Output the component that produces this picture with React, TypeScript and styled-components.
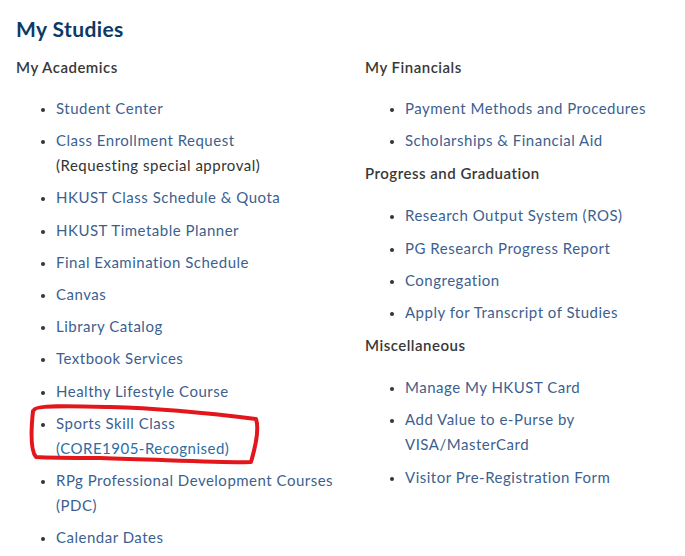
import React from "react";
import styled, { createGlobalStyle } from "styled-components";

const Global = createGlobalStyle`
  html, body { margin: 0; padding: 0; background: #fff; }
  body { font-family: "Lato", "Open Sans", sans-serif; }
`;

const Page = styled.div`
  position: relative;
  padding: 16px 16px 0 16px;
  width: 685px;
  box-sizing: border-box;
`;

const Title = styled.h1`
  margin: 0;
  font-size: 21px;
  line-height: 26px;
  font-weight: 700;
  color: #0c3a64;
  letter-spacing: 0.4px;
`;

const Columns = styled.div`
  display: grid;
  grid-template-columns: 333px 1fr;
  column-gap: 16px;
  margin-top: 14px;
`;

const Column = styled.div`
  display: flex;
  flex-direction: column;
`;

const Heading = styled.h2`
  margin: 0;
  font-size: 15px;
  line-height: 22px;
  font-weight: 600;
  color: #383838;
  letter-spacing: 0.5px;
`;

const List = styled.ul`
  margin: 18px 0 2px;
  padding-left: 40px;
  list-style: disc;
  color: #333;
  ${Heading}:not(:first-child) + & {
    margin-top: 19px;
  }
`;

const Item = styled.li`
  font-size: 15px;
  line-height: 25px;
  margin-bottom: 7.2px;
  letter-spacing: 0.5px;
  &::marker { font-size: 12px; }
`;

const Link = styled.a<{ $accent?: boolean }>`
  color: ${(p) => (p.$accent ? "#2c6ea5" : "#3d5f8f")};
  text-decoration: none;
`;

const Note = styled.span`
  color: #333;
`;

const Scribble = styled.svg`
  position: absolute;
  left: 0;
  top: 0;
  pointer-events: none;
`;

export default function App() {
  return (
    <>
      <Global />
      <Page>
        <Title>My Studies</Title>
        <Columns>
          <Column>
            <Heading>My Academics</Heading>
            <List>
              <Item><Link>Student Center</Link></Item>
              <Item>
                <Link>Class Enrollment Request</Link>
                <br />
                <Note>(Requesting special approval)</Note>
              </Item>
              <Item><Link>HKUST Class Schedule &amp; Quota</Link></Item>
              <Item><Link>HKUST Timetable Planner</Link></Item>
              <Item><Link>Final Examination Schedule</Link></Item>
              <Item><Link>Canvas</Link></Item>
              <Item><Link>Library Catalog</Link></Item>
              <Item><Link>Textbook Services</Link></Item>
              <Item><Link>Healthy Lifestyle Course</Link></Item>
              <Item>
                <Link>Sports Skill Class</Link>
                <br />
                <Link $accent>(CORE1905-Recognised)</Link>
              </Item>
              <Item><Link>RPg Professional Development Courses (PDC)</Link></Item>
              <Item><Link>Calendar Dates</Link></Item>
            </List>
          </Column>
          <Column>
            <Heading>My Financials</Heading>
            <List>
              <Item><Link>Payment Methods and Procedures</Link></Item>
              <Item><Link>Scholarships &amp; Financial Aid</Link></Item>
            </List>
            <Heading>Progress and Graduation</Heading>
            <List>
              <Item><Link>Research Output System (ROS)</Link></Item>
              <Item><Link>PG Research Progress Report</Link></Item>
              <Item><Link>Congregation</Link></Item>
              <Item><Link>Apply for Transcript of Studies</Link></Item>
            </List>
            <Heading>Miscellaneous</Heading>
            <List>
              <Item><Link>Manage My HKUST Card</Link></Item>
              <Item><Link>Add Value to e-Purse by VISA/MasterCard</Link></Item>
              <Item><Link>Visitor Pre-Registration Form</Link></Item>
            </List>
          </Column>
        </Columns>
        <Scribble width="685" height="556" viewBox="0 0 685 556">
          <path
            d="M34 410 C36 405 70 406 110 407 C150 408 200 412 256 419 C259 428 256 445 251 462 C230 463 170 460 100 458 C70 458 50 458 36 457 C30 450 31 430 33 411"
            fill="none"
            stroke="#e3161b"
            strokeWidth="4"
            strokeLinecap="round"
            strokeLinejoin="round"
          />
        </Scribble>
      </Page>
    </>
  );
}
